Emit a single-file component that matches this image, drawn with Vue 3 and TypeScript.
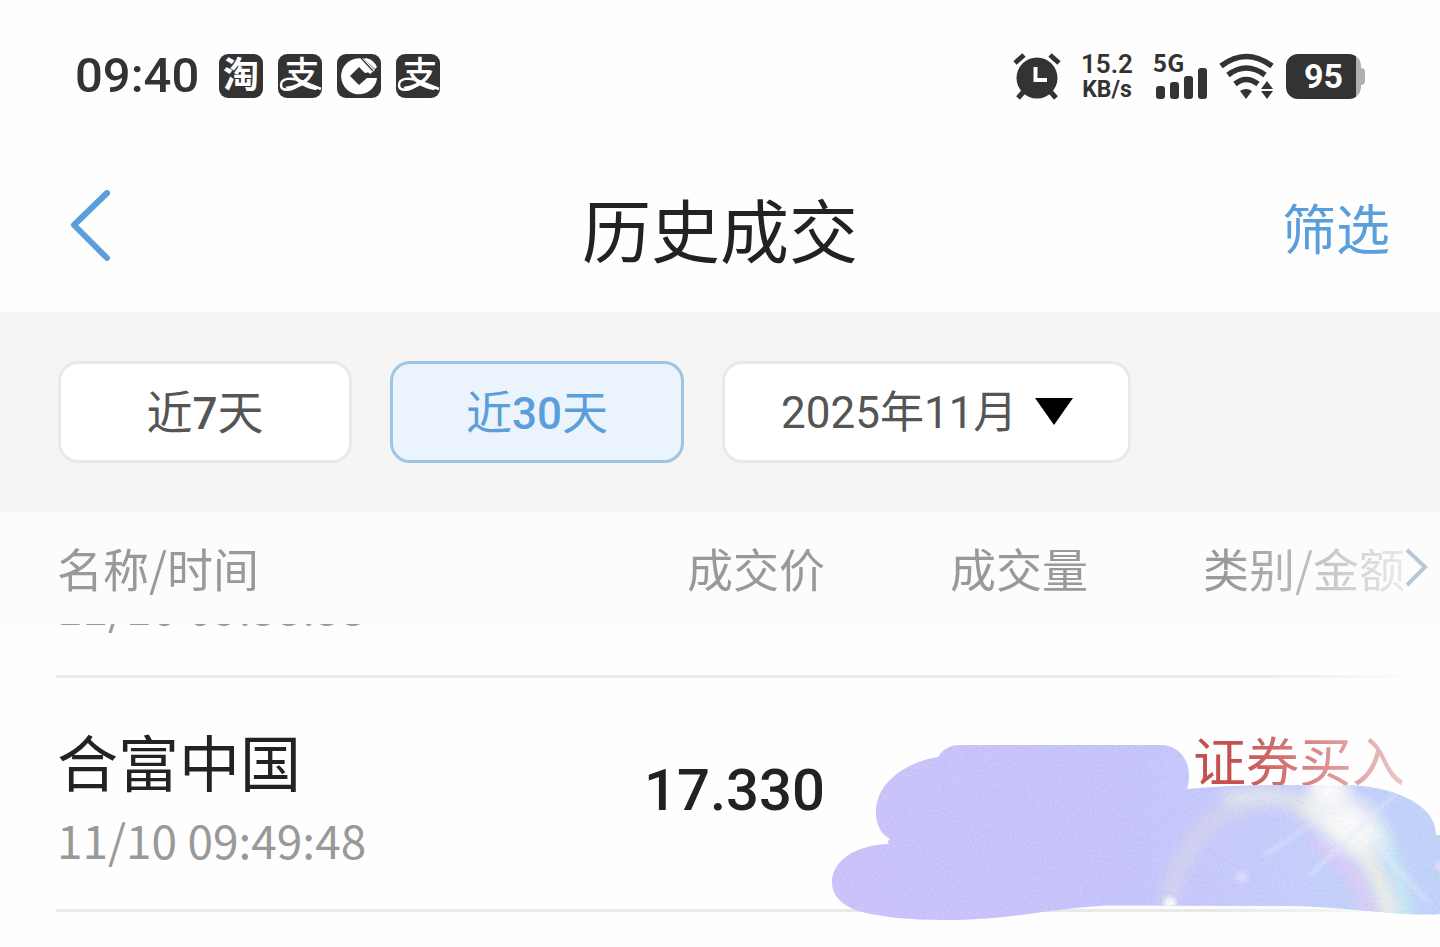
<script setup lang="ts">
import { ref } from 'vue'

interface Trade {
  name: string
  time: string
  price: string
  kind: string
}

interface Range {
  before: string
  count: string
  after: string
}

const ranges: Range[] = [
  { before: '近', count: '7', after: '天' },
  { before: '近', count: '30', after: '天' },
]
const activeRange = ref<string>('30')
const month = ref<string>('2025年11月')
const columns: string[] = ['名称/时间', '成交价', '成交量', '类别/金额']
const trades: Trade[] = [
  { name: '', time: '11/10 09:53:53', price: '', kind: '' },
  { name: '合富中国', time: '11/10 09:49:48', price: '17.330', kind: '证券买入' },
]
</script>

<template>
  <main class="screen">
    <div class="status">
      <div class="status-left">
        <span class="clock">09:40</span>
        <div class="apps">
          <svg class="app" viewBox="0 0 44 44">
            <rect width="44" height="44" rx="9" fill="#333" />
            <text x="22" y="34" text-anchor="middle" class="glyph heavy" font-size="36">淘</text>
          </svg>
          <svg class="app" viewBox="0 0 44 44">
            <rect width="44" height="44" rx="9" fill="#333" />
            <text x="24" y="33" text-anchor="middle" class="glyph" font-size="35">支</text>
            <path d="M22 30C13 38 3 37 3 31C3 24 13 23 23 27L43 35" fill="none" stroke="#fff" stroke-width="2.500" />
          </svg>
          <svg class="app" viewBox="0 0 44 44">
            <rect width="44" height="44" rx="9" fill="#333" />
            <path d="M25 4.500A18 18 0 1 0 40 24H30L22 31L13 22L22 13L28 19L33 18Z" fill="#fff" />
            <path d="M26 4L38 16L33 20L21 8Z" fill="#fff" />
            <path d="M29 4Q37 6 40 13L38 15L27 5Z" fill="#fff" />
            <path d="M24 4L36 17" fill="none" stroke="#333" stroke-width="1.200" />
          </svg>
          <svg class="app" viewBox="0 0 44 44">
            <rect width="44" height="44" rx="9" fill="#333" />
            <text x="24" y="33" text-anchor="middle" class="glyph" font-size="35">支</text>
            <path d="M22 30C13 38 3 37 3 31C3 24 13 23 23 27L43 35" fill="none" stroke="#fff" stroke-width="2.500" />
          </svg>
        </div>
      </div>
      <div class="status-right">
        <svg class="alarm" viewBox="0 0 48 48">
          <g fill="none" stroke="#333" stroke-width="5">
            <path d="M2 11L11 3M37 3L46 11M12 38L5 46M36 38L43 46" />
          </g>
          <circle cx="24" cy="26" r="20.500" fill="#333" />
          <path d="M22.500 15V28H34" fill="none" stroke="#fff" stroke-width="4" />
        </svg>
        <div class="speed">
          <span class="rate">15.2</span>
          <span class="unit">KB/s</span>
        </div>
        <div class="signal">
          <span class="net">5G</span>
          <svg class="bars" viewBox="0 0 54 48" fill="#333">
            <rect x="3" y="34" width="9" height="13" rx="3" />
            <rect x="17" y="30" width="9" height="17" rx="3" />
            <rect x="31" y="24" width="9" height="23" rx="3" />
            <rect x="45" y="16" width="9" height="31" rx="3" />
          </svg>
        </div>
        <svg class="wifi" viewBox="0 0 56 48">
          <g fill="none" stroke="#333" stroke-width="5.500">
            <path d="M2 14Q27 -5 53 14" />
            <path d="M9 23Q27 9 46 23" />
            <path d="M16 32Q27 23 39 32" />
          </g>
          <path d="M21 39Q27 35 33 39L27 47Z" fill="#333" />
          <path d="M48 29L54 37H42ZM42 39H54L48 47Z" fill="#333" />
        </svg>
        <div class="battery"><span class="level">95</span></div>
      </div>
    </div>

    <header class="nav">
      <button class="back" type="button" aria-label="返回">
        <svg viewBox="0 0 40 72">
          <path d="M37 3L4 35L37 68" fill="none" stroke="#5a9edb" stroke-width="6" stroke-linecap="round" stroke-linejoin="round" />
        </svg>
      </button>
      <h1 class="title">历史成交</h1>
      <button class="filter" type="button">筛选</button>
    </header>

    <section class="ranges">
      <button
        v-for="r in ranges"
        :key="r.count"
        type="button"
        class="range"
        :class="{ active: r.count === activeRange }"
        @click="activeRange = r.count"
      >{{ r.before }}<span class="count">{{ r.count }}</span>{{ r.after }}</button>
      <div class="month">
        <select v-model="month" aria-label="月份">
          <option>2025年11月</option>
        </select>
        <svg class="caret" viewBox="0 0 38 27"><path d="M0 0H38L19 27Z" fill="#000" /></svg>
      </div>
    </section>

    <section class="list">
      <table>
        <thead>
          <tr>
            <th v-for="c in columns" :key="c" scope="col">{{ c }}</th>
          </tr>
        </thead>
        <tbody>
          <tr v-for="t in trades" :key="t.time">
            <td class="stock">
              <span class="name">{{ t.name }}</span>
              <span class="time">{{ t.time }}</span>
            </td>
            <td class="price">{{ t.price }}</td>
            <td></td>
            <td class="kind">{{ t.kind }}</td>
          </tr>
        </tbody>
      </table>
      <svg class="more" viewBox="0 0 24 40">
        <path d="M2 2L20 19L2 37" fill="none" stroke="#b9c6d6" stroke-width="4" />
      </svg>
      <svg class="brush" viewBox="832 740 608 184">
        <defs>
          <linearGradient id="base" x1="832" y1="0" x2="1440" y2="0" gradientUnits="userSpaceOnUse">
            <stop offset="0" stop-color="#c5bbfa" />
            <stop offset="0.500" stop-color="#c0bdfb" />
            <stop offset="0.750" stop-color="#c0c8fa" />
            <stop offset="1" stop-color="#b9cff8" />
          </linearGradient>
          <radialGradient id="glow">
            <stop offset="0" stop-color="#ffffff" />
            <stop offset="0.400" stop-color="#fdfdf4" stop-opacity="0.850" />
            <stop offset="1" stop-color="#f0f3f8" stop-opacity="0" />
          </radialGradient>
          <filter id="soft" x="-20%" y="-20%" width="140%" height="140%"><feGaussianBlur stdDeviation="6" /></filter>
          <filter id="fine" x="-20%" y="-20%" width="140%" height="140%"><feGaussianBlur stdDeviation="2" /></filter>
          <filter id="grain" x="0" y="0" width="100%" height="100%">
            <feTurbulence type="fractalNoise" baseFrequency="0.400" numOctaves="2" />
            <feColorMatrix values="1 0 0 0 0.260  0 1 0 0 0.280  0 0 0.400 0 0.750  0 0 0 0 0.180" />
          </filter>
          <clipPath id="stroke">
            <path d="M938 757C944 748 950 745 962 745H1160C1178 745 1189 758 1189 776Q1189 783 1187 789Q1230 785 1290 785H1345C1392 786 1436 803 1436 835H1440V914Q1425 915 1408 914C1370 912 1340 907 1290 906L1110 905.500C1060 907 1010 920 945 920C910 920 882 917 862 912C844 907 832 897 832 882C832 861 855 845 889 844Q886 842 890 839C880 834 876 823 876 812C876 785 902 763 938 757Z" />
          </clipPath>
        </defs>
        <g clip-path="url(#stroke)">
          <rect x="832" y="740" width="608" height="184" fill="url(#base)" />
          <g fill="none" filter="url(#soft)">
            <path d="M1166 910C1180 845 1215 806 1262 800" stroke="#ceceec" stroke-width="18" />
            <path d="M1225 800C1260 792 1290 796 1315 810" stroke="#dde2ea" stroke-width="16" />
            <path d="M1300 808C1350 822 1382 868 1390 920" stroke="#eceee2" stroke-width="17" />
            <path d="M1312 838C1348 860 1364 885 1370 920" stroke="#e2c5f5" stroke-width="10" />
            <path d="M1370 825C1395 855 1404 890 1406 920" stroke="#c0ebf3" stroke-width="13" />
          </g>
          <ellipse cx="1350" cy="824" rx="56" ry="36" transform="rotate(38 1350 824)" fill="url(#glow)" />
          <ellipse cx="1328" cy="792" rx="30" ry="26" fill="url(#glow)" />
          <g stroke="#e4ebfc" stroke-width="2" filter="url(#fine)">
            <path d="M1397 793L1355 832L1310 876M1375 845L1428 902M1325 815L1265 855" />
          </g>
          <circle cx="1170" cy="903" r="9" fill="url(#glow)" />
          <circle cx="1242" cy="877" r="6" fill="#d8d8fa" filter="url(#fine)" />
          <circle cx="1440" cy="866" r="5" fill="#e1dcf8" filter="url(#fine)" />
          <rect x="832" y="740" width="608" height="184" filter="url(#grain)" />
        </g>
      </svg>
    </section>
  </main>
</template>

<style>
body {
  background: #fefefe;
}
</style>

<style scoped>
.screen {
  font-family: Roboto, "Noto Sans CJK SC", sans-serif;
  color: #222;
  min-height: 100vh;
  overflow: hidden;
}
button, select {
  font-family: inherit;
  padding: 0;
  margin: 0;
  cursor: pointer;
}
svg {
  display: block;
}
.status {
  height: 152px;
  box-sizing: border-box;
  padding: 0 79px 0 75px;
  display: flex;
  justify-content: space-between;
  align-items: center;
  color: #333;
}
.status-left, .status-right, .apps {
  display: flex;
  align-items: center;
}
.status-left {
  gap: 20px;
}
.clock {
  font-size: 49px;
  line-height: 56px;
  font-weight: 500;
}
.apps {
  gap: 15px;
}
.app {
  width: 44px;
  height: 44px;
  overflow: visible;
}
.glyph {
  font-family: "Noto Sans CJK SC", sans-serif;
  font-weight: 500;
  fill: #fff;
}
.heavy {
  font-weight: 700;
}
.alarm {
  width: 48px;
  height: 48px;
}
.speed {
  margin-left: 20px;
  padding-top: 2px;
  width: 52px;
  display: flex;
  flex-direction: column;
  align-items: center;
  font-weight: 700;
  line-height: 26px;
}
.rate {
  font-size: 26px;
  font-weight: 600;
}
.unit {
  font-size: 23px;
}
.signal {
  position: relative;
  margin-left: 20px;
  width: 54px;
  height: 48px;
}
.net {
  position: absolute;
  left: 0;
  top: -2px;
  font: 700 24px/24px "Noto Sans CJK SC", sans-serif;
}
.bars {
  width: 54px;
  height: 48px;
}
.wifi {
  width: 56px;
  height: 48px;
  margin-left: 12px;
}
.battery {
  position: relative;
  margin-left: 11px;
  width: 75px;
  height: 45px;
  border-radius: 12px;
  background: linear-gradient(to right, #333 70px, #b0b0b0 70px);
  text-align: center;
}
.battery::after {
  content: "";
  position: absolute;
  right: -4px;
  top: 14px;
  width: 4px;
  height: 17px;
  border-radius: 0 4px 4px 0;
  background: #b0b0b0;
}
.level {
  color: #fff;
  font-size: 34px;
  line-height: 45px;
  font-weight: 700;
}
.nav {
  height: 160px;
  box-sizing: border-box;
  padding: 0 50px 0 70px;
  display: grid;
  grid-template-columns: 1fr auto 1fr;
  align-items: center;
}
.back {
  justify-self: start;
  width: 40px;
  height: 72px;
  margin-bottom: 12px;
  border: 0;
  background: none;
}
.title {
  margin: 0 20px 8px 0;
  font: 400 69px/100px "Noto Sans CJK SC", sans-serif;
}
.filter {
  justify-self: end;
  border: 0;
  background: none;
  color: #5a9edb;
  font-size: 54px;
  line-height: 82px;
}
.ranges {
  height: 200px;
  box-sizing: border-box;
  padding: 0 58px;
  display: flex;
  align-items: center;
  gap: 38px;
  background: #f5f5f5;
}
.range, .month {
  box-sizing: border-box;
  height: 102px;
  border: 3px solid #e9e9e9;
  border-radius: 20px;
  background: #fff;
  color: #555;
}
.range {
  width: 294px;
  padding-bottom: 2px;
  font: 400 46px/64px "Noto Sans CJK SC", sans-serif;
}
.count {
  font-family: Roboto, sans-serif;
  font-size: 44px;
  font-weight: 500;
}
.range.active {
  border-color: #9fc5e4;
  background: #ebf4fc;
  color: #5a9edb;
}
.month {
  position: relative;
  width: 409px;
}
.month select {
  width: 100%;
  height: 100%;
  padding: 2px 0 0 56px;
  border: 0;
  border-radius: 18px;
  background: transparent;
  appearance: none;
  color: inherit;
  font-size: 44px;
  font-weight: 400;
}
.caret {
  position: absolute;
  right: 55px;
  top: 34px;
  width: 38px;
  height: 27px;
  pointer-events: none;
}
.list {
  position: relative;
}
table, thead, tbody {
  display: block;
}
thead {
  background: #fcfcfc;
}
tr {
  position: relative;
  display: grid;
  grid-template-columns: 506fr 263fr 263fr 317fr;
  margin: 0 35px 0 56px;
}
thead tr {
  mask-image: linear-gradient(to right, #000 calc(100% - 180px), rgba(0, 0, 0, 0.18));
}
th, td {
  padding: 0;
  text-align: right;
  font-weight: 400;
}
th {
  height: 112px;
  font: 400 46px/110px "Noto Sans CJK SC", sans-serif;
  color: #999;
  white-space: nowrap;
}
th:first-child, td:first-child {
  text-align: left;
  padding-left: 1px;
}
tbody {
  overflow: hidden;
}
tbody tr {
  height: 234px;
}
tbody tr::after {
  content: "";
  position: absolute;
  left: 0;
  right: 0;
  bottom: 0;
  height: 3px;
  background: linear-gradient(to right, #e9e9e9 calc(100% - 180px), #fbfbfb);
}
tbody tr:first-child {
  margin-top: -180px;
}
.stock {
  display: flex;
  flex-direction: column;
  padding-top: 43px;
  font-family: "Noto Sans CJK SC", sans-serif;
}
.name {
  height: 80px;
  font-size: 61px;
  line-height: 80px;
}
.time {
  margin-top: 8px;
  font-size: 46px;
  line-height: 60px;
  color: #999;
}
.price {
  padding-top: 69px;
  font-size: 58px;
  line-height: 86px;
  font-weight: 500;
}
.kind {
  padding-top: 46px;
  font-size: 53px;
  line-height: 80px;
  color: #c5504f;
  mask-image: linear-gradient(to right, #000 calc(100% - 170px), rgba(0, 0, 0, 0.3));
}
.more {
  position: absolute;
  right: 11px;
  top: 36px;
  width: 24px;
  height: 40px;
}
.brush {
  position: absolute;
  right: 0;
  top: 228px;
  width: 608px;
  height: 184px;
}
</style>
